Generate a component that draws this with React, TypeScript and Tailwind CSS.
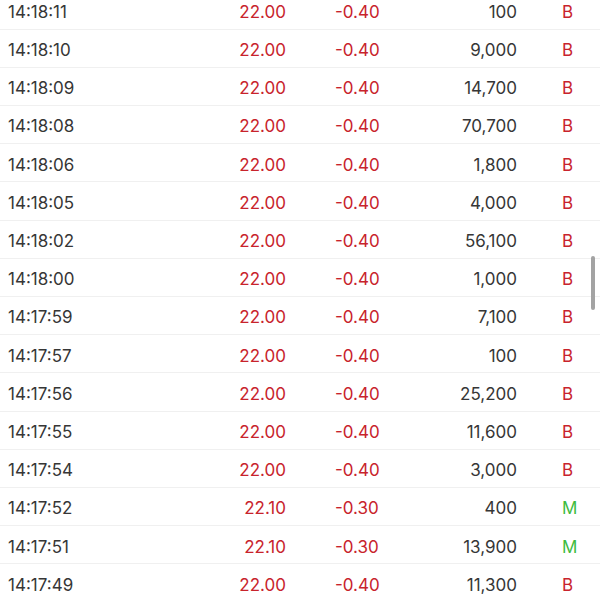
import React from "react";

interface Trade {
  time: string;
  price: string;
  change: string;
  volume: string;
  side: "B" | "M";
}

const trades: Trade[] = [
  { time: "14:18:11", price: "22.00", change: "-0.40", volume: "100", side: "B" },
  { time: "14:18:10", price: "22.00", change: "-0.40", volume: "9,000", side: "B" },
  { time: "14:18:09", price: "22.00", change: "-0.40", volume: "14,700", side: "B" },
  { time: "14:18:08", price: "22.00", change: "-0.40", volume: "70,700", side: "B" },
  { time: "14:18:06", price: "22.00", change: "-0.40", volume: "1,800", side: "B" },
  { time: "14:18:05", price: "22.00", change: "-0.40", volume: "4,000", side: "B" },
  { time: "14:18:02", price: "22.00", change: "-0.40", volume: "56,100", side: "B" },
  { time: "14:18:00", price: "22.00", change: "-0.40", volume: "1,000", side: "B" },
  { time: "14:17:59", price: "22.00", change: "-0.40", volume: "7,100", side: "B" },
  { time: "14:17:57", price: "22.00", change: "-0.40", volume: "100", side: "B" },
  { time: "14:17:56", price: "22.00", change: "-0.40", volume: "25,200", side: "B" },
  { time: "14:17:55", price: "22.00", change: "-0.40", volume: "11,600", side: "B" },
  { time: "14:17:54", price: "22.00", change: "-0.40", volume: "3,000", side: "B" },
  { time: "14:17:52", price: "22.10", change: "-0.30", volume: "400", side: "M" },
  { time: "14:17:51", price: "22.10", change: "-0.30", volume: "13,900", side: "M" },
  { time: "14:17:49", price: "22.00", change: "-0.40", volume: "11,300", side: "B" },
];

const App: React.FC = () => {
  return (
    <div
      className="relative w-[600px] h-[600px] overflow-hidden bg-white"
      style={{ fontFamily: "Inter, 'Noto Sans', sans-serif" }}
    >
      {/* Trade list (scrolled) */}
      <div className="-mt-[8.6px] flex flex-col">
        {trades.map((t) => (
          <div
            key={t.time}
            className="flex items-center pt-[5px] h-[38.21px] border-b border-[#f0f0f0] text-[17px] shrink-0"
          >
            <span className="shrink-0 w-[100px] pl-[8px] text-[#363636]">{t.time}</span>
            <span className="shrink-0 w-[186px] text-right text-[#c8232c]">{t.price}</span>
            <span className="shrink-0 w-[49px]" />
            <span className="shrink-0 w-[60px] text-[#c8232c]">{t.change}</span>
            <span className="shrink-0 w-[122px] text-right text-[#363636]">{t.volume}</span>
            <span
              className={
                t.side === "B"
                  ? "shrink-0 w-[83px] pl-[45px] text-[#c8232c]"
                  : "shrink-0 w-[83px] pl-[45px] text-[#3dbb3d]"
              }
            >
              {t.side}
            </span>
          </div>
        ))}
      </div>

      {/* Scrollbar thumb */}
      <div className="absolute left-[591px] top-[256px] w-[4px] h-[54px] rounded-full bg-[#a3a3a3]" />
    </div>
  );
};

export default App;
